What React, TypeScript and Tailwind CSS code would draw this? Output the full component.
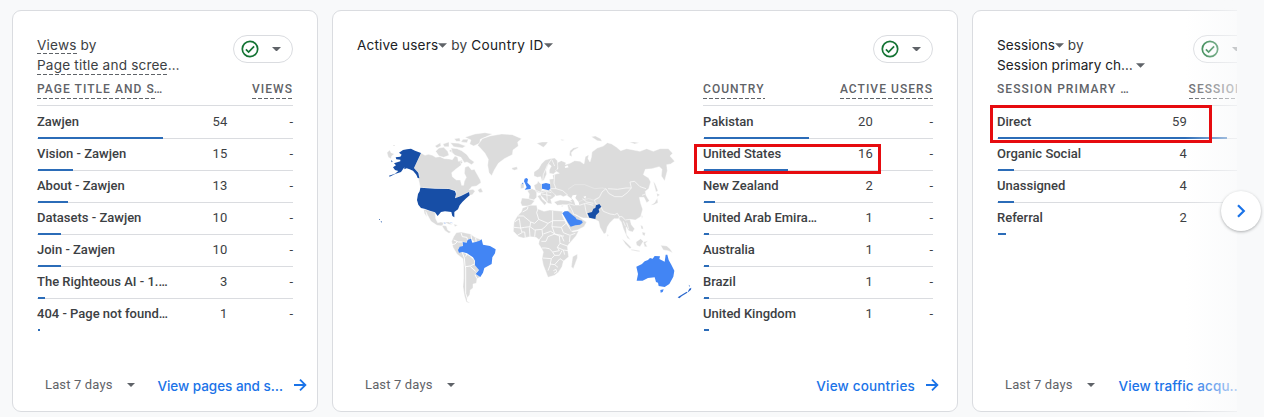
import React from "react";

type Row = { name: string; value: string; bar: number };

const pages: Row[] = [
  { name: "Zawjen", value: "54", bar: 125 },
  { name: "Vision - Zawjen", value: "15", bar: 35 },
  { name: "About - Zawjen", value: "13", bar: 30 },
  { name: "Datasets - Zawjen", value: "10", bar: 23 },
  { name: "Join - Zawjen", value: "10", bar: 23 },
  { name: "The Righteous AI - 1.…", value: "3", bar: 7 },
  { name: "404 - Page not found…", value: "1", bar: 2 },
];

const countries: Row[] = [
  { name: "Pakistan", value: "20", bar: 105 },
  { name: "United States", value: "16", bar: 84 },
  { name: "New Zealand", value: "2", bar: 11 },
  { name: "United Arab Emira…", value: "1", bar: 5 },
  { name: "Australia", value: "1", bar: 5 },
  { name: "Brazil", value: "1", bar: 5 },
  { name: "United Kingdom", value: "1", bar: 5 },
];

const channels: Row[] = [
  { name: "Direct", value: "59", bar: 229 },
  { name: "Organic Social", value: "4", bar: 16 },
  { name: "Unassigned", value: "4", bar: 16 },
  { name: "Referral", value: "2", bar: 8 },
];

function Caret({ className = "" }: { className?: string }) {
  return (
    <svg viewBox="0 0 10 5" className={`inline-block shrink-0 fill-[#5f6368] ${className}`}>
      <path d="M0 0H10L5 5Z" />
    </svg>
  );
}

function Dashed({ children, gap = "" }: { children: React.ReactNode; gap?: string }) {
  return (
    <span className="inline-flex flex-col">
      <span className={gap}>{children}</span>
      <span className="h-px bg-[repeating-linear-gradient(90deg,#5f6368_0_4px,transparent_4px_6px)]" />
    </span>
  );
}

function StatusChip() {
  return (
    <div className="flex h-7 w-[60px] shrink-0 items-center rounded-full border border-[#dadce0] bg-white pl-[7px]">
      <svg viewBox="0 0 18 18" className="size-[18px]" fill="none" stroke="#137333" strokeWidth="1.7">
        <circle cx="9" cy="9" r="7.7" />
        <path d="M4.9 9.3L7.6 12L13.1 6.4" />
      </svg>
      <Caret className="ml-[13px] h-[4.5px] w-[9px]" />
    </div>
  );
}

function Table({
  head,
  metric,
  rows,
  numberWidth,
  change = "-",
}: {
  head: React.ReactNode;
  metric: string;
  rows: Row[];
  numberWidth: string;
  change?: string;
}) {
  return (
    <div>
      <div className="flex h-[31px] justify-between border-b border-[#dadce0] pt-[6px] text-[12px] leading-[17px] font-medium tracking-[1.05px] whitespace-nowrap text-[#5f6368]">
        <div>{head}</div>
        <div>
          <Dashed>{metric}</Dashed>
        </div>
      </div>
      <div className="pt-px">
        {rows.map((r, i) => (
          <div
            key={r.name}
            className={`flex h-8 flex-col border-b ${i === rows.length - 1 ? "border-transparent" : "border-[#dadce0]"}`}
          >
            <div className="flex h-[30px] shrink-0 items-center text-[13px] leading-[30px] text-[#3c4043]">
              <span className="flex-1 font-medium whitespace-nowrap">{r.name}</span>
              <span className="tracking-[0.2px]">{r.value}</span>
              <span className={`text-right ${numberWidth}`}>{change}</span>
            </div>
            <div className="ml-px h-[2px] shrink-0 bg-[#2b6cb8]" style={{ width: r.bar }} />
          </div>
        ))}
      </div>
    </div>
  );
}

function Footer({ link, linkClass, end }: { link: string; linkClass: string; end: string }) {
  return (
    <div className={`mt-auto mb-[8px] flex h-9 items-center pl-8 ${end}`}>
      <span className="w-[82px] text-[13px] tracking-[0.15px] whitespace-nowrap text-[#5f6368]">Last 7 days</span>
      <Caret className="h-[4px] w-[8px]" />
      <span
        className={`ml-auto pt-[3px] font-[Inter,sans-serif] text-[13.5px] font-medium whitespace-nowrap text-[#1a73e8] ${linkClass}`}
      >
        {link}
      </span>
      <svg viewBox="0 0 14 14" className="ml-[10px] size-[14px] shrink-0" fill="none" stroke="#1a73e8" strokeWidth="1.8">
        <path d="M1 7H12M7 1.6L12.4 7L7 12.4" />
      </svg>
    </div>
  );
}

function WorldMap() {
  return (
    <svg viewBox="357 75 346 270" className="h-[270px] w-[346px] shrink-0">
      <g transform="translate(375 120) scale(.33333)" fill="#dcdcdc" stroke="#fff" strokeWidth="1.2">
        <path d="M36 98L44 90 48 98 58 102 50 108 48 116 40 112ZM54 75H60V78H54Z" />
        <path d="M138 99L150 106 160 103 172 106 182 112 195 110 208 116 222 117 232 119 240 108 248 112 250 124 262 120 258 136 242 148 230 158 232 170 244 180 256 180 260 196 266 196 268 184 274 172 268 160 270 142 280 138 290 150 298 148 306 162 316 180 318 188 304 198 290 200 282 210 294 208 300 214 292 224 284 226 282 216 258 228 242 235 243 213 222 207 136 203 131 180 132 158 122 151 117 144Z" />
        <path d="M308 210L318 204 324 216 314 218Z" />
        <path d="M182 94L192 84 206 82 218 94 222 106 206 112 192 108ZM180 78L196 68 198 78 186 84ZM204 72L222 66 222 80 208 80ZM228 84L246 86 260 92 276 104 284 116 298 126 290 134 276 126 268 128 258 112 240 106 232 98ZM226 68L250 70 272 78 262 84 236 80ZM258 66L276 68 280 58 264 58ZM270 52L300 42 330 38 352 42 334 50 316 58 314 70 296 78 284 72 288 60ZM238 56L254 54 256 64 244 64ZM254 122L264 126 258 132ZM222 92L230 88 230 98Z" />
        <path d="M308 76L322 56 345 48 380 42 412 44 440 56 428 66 430 78 414 90 412 104 388 116 370 130 358 150 350 167 342 158 338 136 340 118 330 100 318 86Z" />
        <path d="M412 143L426 140 428 148 418 151 410 147Z" />
        <path d="M146 268L165 272 180 277 182 296 188 308 198 306 206 308 202 318 186 316 168 304 158 286 152 274 156 292 148 280ZM200 316L214 318 218 330 228 336 222 340 210 332ZM208 306L222 306 232 314 220 312ZM236 312L248 316 240 320Z" />
        <path d="M230 364L236 350 244 338 258 336 286 342 300 352 320 360 314 366 300 368 290 358 278 359 275 368 263 366 264 378 252 384 252 394 270 400 284 408 298 420 300 434 312 448 302 462 316 470 306 476 304 490 294 492 294 504 286 510 284 524 278 532 276 542 286 550 274 546 268 526 264 500 266 474 266 440 264 416 246 402 234 382Z" />
        <path fill="none" strokeWidth="2.8" d="M236 360L250 366 262 366M258 338L262 350 276 352 278 362M230 374L240 372 246 366M262 398L268 414 270 436 272 444 272 480 272 520 280 546M272 410L276 400M272 440L286 438 298 432M288 344L290 358M302 354L304 368M286 440L302 454M300 464L306 476" />
        <g stroke="none">
          <path fill="#174ea6" d="M72 98L84 90 96 88 108 86 120 92 138 99 117 144 122 150 130 158 133 175 128 174 124 164 114 152 104 148 95 145 88 148 88 142 78 156 60 162 44 170 42 167 60 161 70 153 60 150 54 142 63 136 57 130 76 124 76 119 64 118 62 112 76 110 80 104Z" />
          <path fill="#174ea6" d="M136 203L180 206 222 207 240 213 243 222 240 235 258 228 282 216 284 226 272 236 262 246 254 256 249 268 238 276 238 292 232 288 229 276 210 274 198 276 188 288 180 277 165 272 148 266 138 264 130 254 126 240 129 222 134 214Z" />
          <path fill="#174ea6" d="M17 303L21 305 19 308ZM12 298H15V300H12ZM48 121L53 124 50 127Z" />
          <path fill="#4285f4" d="M263 366L275 368 278 359 288 356 292 368 302 366 314 362 320 358 324 374 345 378 362 388 360 400 352 412 350 432 328 444 324 458 316 471 302 462 312 450 300 436 300 422 294 412 276 400 262 396 252 398 249 390 254 380 264 378Z" />
          <path fill="#c2d6f8" d="M206 306L214 310 208 312ZM226 306L236 310 226 309Z" />
        </g>
      </g>
      <g transform="translate(520 120) scale(.33333)" fill="#dcdcdc" stroke="#fff" strokeWidth="1.2">
        <path d="M50 70L66 66 84 66 78 74 70 82 60 76ZM122 58L134 60 126 62ZM214 50L226 48 242 56 246 64 232 62ZM328 66L342 66 358 68 344 72ZM148 106L150 92 160 84 176 80 174 84 162 90 154 98 156 110Z" />
        <path d="M42 168L42 156 56 146 64 132 76 120 90 116 104 114 112 122 114 136 112 152 100 162 88 160 88 150 94 138 86 132 78 150 80 162 72 180 66 184 62 170 52 172Z" />
        <path d="M6 234L26 236 44 242 34 254 24 258 6 258 2 248ZM22 212L36 206 50 212 50 232 42 240 26 236 28 222ZM42 196L52 190 54 182 60 190 66 192 66 208 64 220 48 216ZM52 228L62 224 66 236 80 248 74 256 62 242Z" />
        <path d="M64 212L90 210 104 218 106 228 96 236 92 238 96 252 84 250 72 236 62 226Z" />
        <path d="M90 208L90 190 88 178 100 176 98 166 108 162 118 160 106 152 114 146 112 128 124 122 138 128 136 134 150 130 164 122 180 124 192 132 196 110 206 104 204 116 210 126 214 112 216 96 232 84 250 78 262 68 275 72 290 82 302 92 320 86 340 90 360 94 380 86 400 94 420 86 445 86 458 100 450 108 464 124 452 132 440 134 442 152 434 183 424 168 426 148 418 140 396 146 376 148 370 164 386 174 392 186 386 206 376 214 378 226 388 242 380 248 372 232 358 232 362 250 368 268 362 290 346 300 330 298 334 314 344 326 338 336 326 332 318 320 320 344 332 360 322 354 310 326 304 306 296 296 282 296 270 308 262 320 258 338 252 342 240 322 236 304 220 296 204 294 190 294 178 290 168 284 158 284 146 272 142 254 130 254 112 256 102 246 120 240 150 242 156 238 140 226 130 230 122 226 110 228 98 218Z" />
        <path fill="#fff" stroke="none" d="M158 226L170 224 166 234 176 246 178 256 166 256 162 242 154 234ZM190 230L198 228 196 236ZM134 140L142 136 146 142 136 144Z" />
        <path d="M8 264L30 256 50 256 52 266 72 274 90 270 108 272 128 274 126 284 136 306 150 326 158 336 176 332 168 348 150 368 142 378 144 396 146 410 130 424 126 440 116 456 104 466 84 472 78 456 70 436 66 416 70 396 64 384 56 372 58 360 48 352 30 350 10 354 -4 350 -20 334 -18 306 -8 288 4 276Z" />
        <path d="M140 272L150 272 160 282 176 290 190 300 200 306 192 320 172 330 154 334 140 306 128 280Z" />
        <path fill="none" strokeWidth="2.4" d="M8 276L22 268 24 260M-8 288H10L32 306 44 310 56 298 50 278 54 266M56 298L84 310 98 302 98 272M98 302H134M32 306L30 320 14 322 2 324-2 296-16 306M30 320L44 330 66 328 76 320 84 310M-18 322L2 324 6 338-8 346M6 336H14L16 352M28 322L30 350M46 330L44 350M66 328L68 346 56 362M70 342L92 334 104 342 96 320 98 302M96 320L124 322 138 310M104 342L124 346 132 364M124 322L130 338 150 346 166 340M64 364H78L84 350 104 342 118 348 120 370 112 382 118 392 98 396 88 386 76 384H66M120 370L142 378M112 382L130 390 144 392M68 414L94 416 104 406 98 396M94 416L90 436 84 452M104 406L118 406 126 392M90 432L104 434 120 416 132 424M104 434L114 442M100 452L108 448 110 456 102 460M118 348L132 348M130 390L134 404M150 348L148 366" />
        <path fill="none" strokeWidth="2" d="M104 164L102 190 108 206 128 212 144 226M90 206L108 206M68 184L70 164 82 136 94 118M96 120L104 138M50 212L64 218 80 214 94 218M66 222L94 228M80 216L82 244M258 206L266 220 284 230 306 230 322 218 334 204M264 206L292 208 318 204 334 204 330 186 344 184 360 200 378 206M258 206L246 216 238 232 224 240 226 250 240 256M178 256L196 250 220 256M188 236L200 246 220 250M142 254L150 252 164 256M148 256L156 270 162 284M194 252L198 274 204 292M242 260L250 274 270 282 284 284 292 280 298 290 296 300M298 290L306 290 316 300 330 298M310 304L316 318M320 308L326 328M376 222L366 226M382 234L388 230M142 240L156 246M128 254L138 266" />
        <path fill="none" stroke="#f1f1f1" strokeWidth="1.4" d="M144 208L164 194 194 194 224 206 246 204 258 206M176 246L188 240 206 236 220 240 238 232" />
        <path d="M2 192L12 190 12 204 2 206ZM122 258L130 256 128 260ZM400 184L406 192 414 212 408 216 404 200ZM410 220L420 224 412 230ZM412 234L414 248 402 254 392 256 404 248ZM364 286L368 288 366 296ZM262 342L266 346 262 350ZM306 356L318 366 334 382 330 386 316 372ZM348 366L362 356 370 364 360 380 350 376ZM334 388L360 392 358 395 334 391ZM370 366L384 362 376 370 382 380 374 380ZM422 376L440 378 450 386 458 398 444 392 430 390ZM362 316L368 318 370 328 364 326ZM366 336L376 338 374 348 368 344ZM158 410L172 402 172 414 160 446 154 440Z" />
        <g stroke="none">
          <path fill="#4285f4" d="M14 176L20 174 24 178 22 188 32 198 32 207 14 209 20 202 16 192 12 184ZM5 189L10 188 9 193ZM66 192L78 189 90 192 91 206 86 211 66 206Z" />
          <path fill="#4285f4" d="M127 280L134 274 144 274 158 286 166 292 170 298 186 302 188 308 180 314 166 316 152 320 144 308 138 298Z" />
          <path fill="#174ea6" d="M202 280L216 276 220 266 226 264 228 256 238 252 244 260 236 268 238 276 228 286 226 297 208 293Z" />
          <path fill="#4285f4" d="M349 440L366 432 374 424 384 420 390 414 398 416 404 408 420 409 418 417 434 425 437 404 442 404 446 420 454 434 463 452 460 470 448 492 434 501 416 498 414 488 408 486 404 472 384 474 368 482 350 482 354 462ZM421 510L431 508 428 516 422 518Z" />
          <path fill="#2966cc" d="M506 494L510 498 508 500ZM508 506L514 503 513 509 502 518ZM500 515L502 518 486 528 478 535 473 532Z" />
        </g>
      </g>
    </svg>
  );
}

const card = "flex h-[402px] shrink-0 flex-col rounded-[9px] border border-[#dadce0] bg-white pt-6";
const title = "font-[Inter,sans-serif] text-[13.6px] leading-5 whitespace-nowrap";

export default function App() {
  return (
    <div className="relative h-[417px] w-[1264px] overflow-hidden bg-[#f8f9fa] font-[Roboto,sans-serif]">
      <div className="flex w-[1237px] gap-[14px] overflow-hidden pt-[10px] pl-3">
        <section className={`${card} w-[306px]`}>
          <div className="px-6">
            <div className="flex h-10 items-start justify-between">
              <div className={`${title} tracking-[0.18px] text-[#3c4043]`}>
                <div className="flex h-5 items-start">
                  <Dashed gap="h-[18px]">Views</Dashed>
                  <span>&nbsp;by</span>
                </div>
                <div className="flex h-5 items-start">
                  <Dashed gap="h-[19px]">Page title and scree</Dashed>
                  <span>…</span>
                </div>
              </div>
              <StatusChip />
            </div>
            <Table
              head={
                <div className="flex">
                  <Dashed>PAGE TITLE AND S</Dashed>
                  <span className="-ml-px">…</span>
                </div>
              }
              metric="VIEWS"
              rows={pages}
              numberWidth="w-[65.5px]"
            />
          </div>
          <Footer link="View pages and s…" linkClass="-tracking-[0.03px]" end="pr-[10px]" />
        </section>

        <section className={`${card} w-[626px]`}>
          <div className="px-6">
            <div className="flex h-10 items-start justify-between">
              <div className={`${title} flex items-center tracking-[0.15px] text-[#202124]`}>
                Active users
                <Caret className="h-[5px] w-[9px]" />
                <span className="text-[#3c4043]">&nbsp;by&nbsp;</span>
                <span className="tracking-[0.35px]">Country ID</span>
                <Caret className="h-[5px] w-[9px]" />
              </div>
              <StatusChip />
            </div>
            <div className="flex h-[270px]">
              <WorldMap />
              <div className="w-[230px] shrink-0">
                <Table head={<Dashed>COUNTRY</Dashed>} metric="ACTIVE USERS" rows={countries} numberWidth="w-[60px]" />
              </div>
            </div>
          </div>
          <Footer link="View countries" linkClass="tracking-[0.17px]" end="pr-[18px]" />
        </section>

        <section className={`${card} w-[306px]`}>
          <div className="px-6">
            <div className="flex h-10 items-start justify-between">
              <div className={`${title} tracking-[0.04px] text-[#202124]`}>
                <div className="flex items-center">
                  Sessions
                  <Caret className="h-[5px] w-[9px]" />
                  <span className="text-[#3c4043]">&nbsp;by</span>
                </div>
                <div className="flex items-center">
                  Session primary ch…
                  <Caret className="ml-[3px] h-[5px] w-[9px]" />
                </div>
              </div>
              <StatusChip />
            </div>
            <Table head="SESSION PRIMARY …" metric="SESSIONS" rows={channels} numberWidth="w-[66px]" change="" />
          </div>
          <Footer link="View traffic acqu…" linkClass="tracking-[0.1px]" end="pr-[11px]" />
        </section>
      </div>

      <div className="absolute top-0 left-[1185px] h-full w-[52px] bg-linear-to-r from-[#f8f9fa]/0 to-[#f8f9fa]/70" />
      <div className="absolute top-[144px] left-[694px] h-[30px] w-[187px] border-3 border-[#e60b0f]" />
      <div className="absolute top-[105px] left-[990px] h-[38px] w-[222px] border-3 border-[#e60b0f]" />
      <button className="absolute top-[191px] left-[1221px] flex size-10 items-center justify-center rounded-full bg-white shadow-[0_1px_3px_rgba(60,64,67,0.4)]">
        <svg viewBox="0 0 10 14" className="h-[14px] w-[10px]" fill="none" stroke="#1a73e8" strokeWidth="2.2">
          <path d="M2 1.2L7.8 7L2 12.8" />
        </svg>
      </button>
    </div>
  );
}
